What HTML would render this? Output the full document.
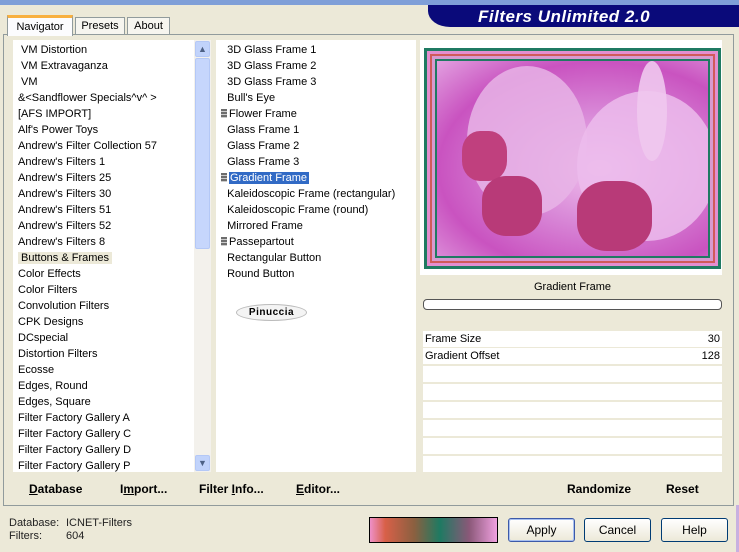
<!DOCTYPE html>
<html><head><meta charset="utf-8"><style>
*{margin:0;padding:0;box-sizing:border-box}
body{width:739px;height:552px;background:#ece9d8;font-family:"Liberation Sans",sans-serif;font-size:11px;color:#000;position:relative;overflow:hidden}
.a{position:absolute}
.list div{height:16px;line-height:16px;white-space:nowrap}
.btn{position:absolute;border:1px solid #003c74;border-radius:3px;background:linear-gradient(#fff,#ece9d8);text-align:center;line-height:22px;font-size:12px}
.row{position:absolute;left:423px;width:299px;height:16px;background:#fff;line-height:16px;font-size:11px}
.bar{display:inline-block;width:6px;height:9px;margin-right:2px;vertical-align:-1px;background:repeating-linear-gradient(#6d6d6d 0 2px,#ccc 2px 3px)}
</style></head><body>
<div class="a" style="left:0;top:0;width:739px;height:5px;background:#7f9fd8"></div>
<div class="a" style="left:428px;top:5px;width:311px;height:22px;background:#0a0a7a;border-bottom-left-radius:22px 16px"></div>
<div class="a" style="left:478px;top:7px;font-size:17px;font-weight:bold;font-style:italic;color:#fff;letter-spacing:0.5px">Filters Unlimited 2.0</div>
<div class="a" style="left:3px;top:34px;width:731px;height:472px;border:1px solid #919b9c;background:#ece9d8"></div>
<div class="a" style="left:7px;top:15px;width:66px;height:21px;background:#fcfcfe;border:1px solid #919b9c;border-bottom:none;border-top:3px solid #f8b040;text-align:center;line-height:18px;font-size:11px">Navigator</div>
<div class="a" style="left:75px;top:17px;width:50px;height:18px;background:#f6f5ef;border:1px solid #919b9c;text-align:center;line-height:17px">Presets</div>
<div class="a" style="left:127px;top:17px;width:43px;height:18px;background:#f6f5ef;border:1px solid #919b9c;text-align:center;line-height:17px">About</div>
<div class="a" style="left:13px;top:40px;width:198px;height:432px;background:#fff"></div>
<div class="a list" style="left:18px;top:42px;width:175px">
<div>&nbsp;VM Distortion</div><div>&nbsp;VM Extravaganza</div><div>&nbsp;VM</div><div>&amp;&lt;Sandflower Specials^v^ &gt;</div><div>[AFS IMPORT]</div><div>Alf's Power Toys</div><div>Andrew's Filter Collection 57</div><div>Andrew's Filters 1</div><div>Andrew's Filters 25</div><div>Andrew's Filters 30</div><div>Andrew's Filters 51</div><div>Andrew's Filters 52</div><div>Andrew's Filters 8</div><div><span style="background:#ece9d8;padding:0 3px">Buttons &amp; Frames</span></div><div>Color Effects</div><div>Color Filters</div><div>Convolution Filters</div><div>CPK Designs</div><div>DCspecial</div><div>Distortion Filters</div><div>Ecosse</div><div>Edges, Round</div><div>Edges, Square</div><div>Filter Factory Gallery A</div><div>Filter Factory Gallery C</div><div>Filter Factory Gallery D</div><div>Filter Factory Gallery P</div>
</div>
<div class="a" style="left:194px;top:40px;width:17px;height:432px;background:#f3f1ec"></div>
<div class="a" style="left:195px;top:41px;width:15px;height:16px;background:#c1d3fb;border:1px solid #b4c8f6;border-radius:2px;font-size:9px;text-align:center;color:#4d6185;line-height:14px">▲</div>
<div class="a" style="left:195px;top:58px;width:15px;height:191px;background:#c6d6fc;border:1px solid #b4c8f6;border-radius:2px"></div>
<div class="a" style="left:195px;top:455px;width:15px;height:16px;background:#c1d3fb;border:1px solid #b4c8f6;border-radius:2px;font-size:9px;text-align:center;color:#4d6185;line-height:14px">▼</div>
<div class="a" style="left:216px;top:40px;width:200px;height:432px;background:#fff"></div>
<div class="a list" style="left:221px;top:42px;width:190px">
<div>&nbsp; 3D Glass Frame 1</div><div>&nbsp; 3D Glass Frame 2</div><div>&nbsp; 3D Glass Frame 3</div><div>&nbsp; Bull's Eye</div><div><span class="bar"></span>Flower Frame</div><div>&nbsp; Glass Frame 1</div><div>&nbsp; Glass Frame 2</div><div>&nbsp; Glass Frame 3</div><div><span class="bar"></span><span style="background:#316ac5;color:#fff;padding:0 2px 0 1px">Gradient Frame</span></div><div>&nbsp; Kaleidoscopic Frame (rectangular)</div><div>&nbsp; Kaleidoscopic Frame (round)</div><div>&nbsp; Mirrored Frame</div><div><span class="bar"></span>Passepartout</div><div>&nbsp; Rectangular Button</div><div>&nbsp; Round Button</div>
</div>
<div class="a" style="left:236px;top:304px;width:71px;height:17px;border:1px solid #bbb;border-radius:50%;background:#f4f4f4;text-align:center;font-size:10px;font-weight:bold;line-height:15px;letter-spacing:0.5px">Pinuccia</div>
<div class="a" style="left:420px;top:40px;width:302px;height:235px;background:#fff"></div>
<div class="a" style="left:424px;top:48px;width:297px;height:221px;background:#1f7a62;padding:3px">
 <div style="width:100%;height:100%;border:3px solid #e48ed0;background:#d05a5a;padding:2px"><div style="width:100%;height:100%;border:3px solid #d89ad0;background:#1f7a62;padding:2px"><div style="width:100%;height:100%;background:radial-gradient(ellipse at 60% 55%,#f0c0ec 0%,#d98ad8 35%,#c953c0 70%,#e2a0e0 100%);position:relative;overflow:hidden">
  <div class="a" style="left:30px;top:5px;width:120px;height:150px;border-radius:50%;background:#e8b4e6;opacity:.85"></div>
  <div class="a" style="left:140px;top:30px;width:140px;height:150px;border-radius:50%;background:#ecbcec;opacity:.85"></div>
  <div class="a" style="left:200px;top:0px;width:30px;height:100px;border-radius:50%;background:#efc8ee;opacity:.9"></div>
  <div class="a" style="left:25px;top:70px;width:45px;height:50px;border-radius:40%;background:#c0407e"></div>
  <div class="a" style="left:45px;top:115px;width:60px;height:60px;border-radius:40%;background:#b83a78"></div>
  <div class="a" style="left:140px;top:120px;width:75px;height:70px;border-radius:40%;background:#b83a78"></div>
 </div></div></div>
</div>
<div class="a" style="left:423px;top:277px;width:299px;height:20px;text-align:center;line-height:20px">Gradient Frame</div>
<div class="a" style="left:423px;top:299px;width:299px;height:11px;border:1px solid #555;border-radius:4px;background:#fff"></div>
<div class="row" style="top:331px"><span style="padding-left:2px">Frame Size</span><span style="position:absolute;right:2px">30</span></div>
<div class="row" style="top:348px"><span style="padding-left:2px">Gradient Offset</span><span style="position:absolute;right:2px">128</span></div>
<div class="row" style="top:366px"></div><div class="row" style="top:384px"></div><div class="row" style="top:402px"></div><div class="row" style="top:420px"></div><div class="row" style="top:438px"></div><div class="row" style="top:456px"></div>
<div class="a" style="left:29px;top:482px;font-weight:bold;font-size:12px"><u>D</u>atabase</div>
<div class="a" style="left:120px;top:482px;font-weight:bold;font-size:12px">I<u>m</u>port...</div>
<div class="a" style="left:199px;top:482px;font-weight:bold;font-size:12px">Filter <u>I</u>nfo...</div>
<div class="a" style="left:296px;top:482px;font-weight:bold;font-size:12px"><u>E</u>ditor...</div>
<div class="a" style="left:567px;top:482px;font-weight:bold;font-size:12px">Randomize</div>
<div class="a" style="left:666px;top:482px;font-weight:bold;font-size:12px">Reset</div>
<div class="a" style="left:9px;top:517px;line-height:13px;color:#222">Database:<br>Filters:</div>
<div class="a" style="left:66px;top:517px;line-height:13px;color:#222">ICNET-Filters<br>604</div>
<div class="a" style="left:369px;top:517px;width:129px;height:26px;border:1px solid #000;background:linear-gradient(90deg,#ee90c8 0%,#d86048 12%,#8a6040 35%,#1e7a62 55%,#8a5878 78%,#f0a0e0 100%)"></div>
<div class="btn" style="left:508px;top:518px;width:67px;height:24px;border-color:#3c5aa8;box-shadow:inset 0 0 0 1px #a8c0f0">Apply</div>
<div class="btn" style="left:584px;top:518px;width:67px;height:24px">Cancel</div>
<div class="btn" style="left:661px;top:518px;width:67px;height:24px">Help</div>
<div class="a" style="left:736px;top:505px;width:3px;height:47px;background:#c8b0e0"></div>
</body></html>
